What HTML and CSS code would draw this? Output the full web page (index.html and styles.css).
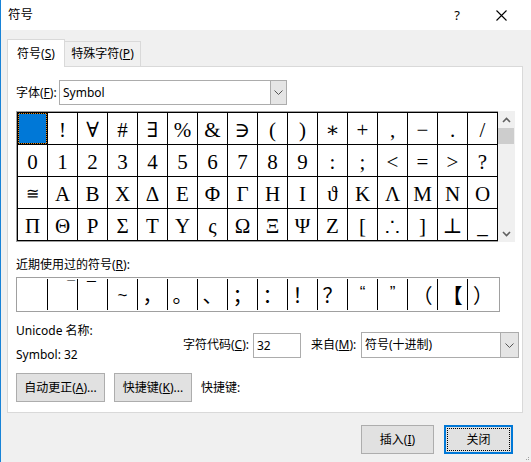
FILE: index.html
```html
<!DOCTYPE html>
<html lang="zh">
<head>
<meta charset="utf-8">
<title>符号</title>
<link rel="stylesheet" href="styles.css">
</head>
<body>
<div class="win">
  <div class="titlebar">
    <span class="title">符号</span>
    <span class="help">?</span>
    <span class="close"><svg width="11" height="11" viewBox="0 0 11 11"><path d="M0.5 0.5 L10.5 10.5 M10.5 0.5 L0.5 10.5" stroke="#000" stroke-width="1.1" fill="none"/></svg></span>
  </div>
  <div class="body">
    <div class="tabs">
      <div class="tab active">符号(<u>S</u>)</div>
      <div class="tab inactive">特殊字符(<u>P</u>)</div>
    </div>
    <div class="panel">
      <div class="fontrow">
        <span class="fontlabel">字体(<u>F</u>):</span>
        <div class="select fontselect">
          <span class="seltext">Symbol</span>
          <span class="selbtn"><svg width="9" height="5" viewBox="0 0 9 5"><polyline points="0.5,0.5 4.5,4.5 8.5,0.5" stroke="#555" stroke-width="1" fill="none"/></svg></span>
        </div>
      </div>
      <div class="gridwrap">
        <div class="gridbox">
          <div class="grid">
            <div class="cell sel"><span></span></div><div class="cell">!</div><div class="cell">∀</div><div class="cell">#</div><div class="cell">∃</div><div class="cell">%</div><div class="cell">&amp;</div><div class="cell">∋</div><div class="cell">(</div><div class="cell">)</div><div class="cell">∗</div><div class="cell">+</div><div class="cell">,</div><div class="cell">−</div><div class="cell">.</div><div class="cell">/</div>
            <div class="cell">0</div><div class="cell">1</div><div class="cell">2</div><div class="cell">3</div><div class="cell">4</div><div class="cell">5</div><div class="cell">6</div><div class="cell">7</div><div class="cell">8</div><div class="cell">9</div><div class="cell">:</div><div class="cell">;</div><div class="cell">&lt;</div><div class="cell">=</div><div class="cell">&gt;</div><div class="cell">?</div>
            <div class="cell small">≅</div><div class="cell">Α</div><div class="cell">Β</div><div class="cell">Χ</div><div class="cell">Δ</div><div class="cell">Ε</div><div class="cell">Φ</div><div class="cell">Γ</div><div class="cell">Η</div><div class="cell">Ι</div><div class="cell">ϑ</div><div class="cell">Κ</div><div class="cell">Λ</div><div class="cell">Μ</div><div class="cell">Ν</div><div class="cell">Ο</div>
            <div class="cell">Π</div><div class="cell">Θ</div><div class="cell">Ρ</div><div class="cell">Σ</div><div class="cell">Τ</div><div class="cell">Υ</div><div class="cell">ς</div><div class="cell">Ω</div><div class="cell">Ξ</div><div class="cell">Ψ</div><div class="cell">Ζ</div><div class="cell">[</div><div class="cell">∴</div><div class="cell">]</div><div class="cell">⊥</div><div class="cell">_</div>
          </div>
        </div>
        <div class="scrollbar">
          <span class="sbtn"><svg width="9" height="6" viewBox="0 0 9 6"><polyline points="1,5 4.5,1.5 8,5" stroke="#606060" stroke-width="1.6" fill="none"/></svg></span>
          <span class="thumb"></span>
          <span class="strack"></span>
          <span class="sbtn"><svg width="9" height="6" viewBox="0 0 9 6"><polyline points="1,1 4.5,4.5 8,1" stroke="#606060" stroke-width="1.6" fill="none"/></svg></span>
        </div>
      </div>
      <div class="recentlabel">近期使用过的符号(<u>R</u>):</div>
      <div class="recent">
        <div class="rc"></div><div class="rc r-right">¯</div><div class="rc latin macron">¯</div><div class="rc latin tilde">~</div><div class="rc">，</div><div class="rc">。</div><div class="rc">、</div><div class="rc">；</div><div class="rc">：</div><div class="rc">！</div><div class="rc">？</div><div class="rc latin quote">“</div><div class="rc latin quote">”</div><div class="rc">（</div><div class="rc bold">【</div><div class="rc last">）</div>
      </div>
      <div class="inforow">
        <div class="infoleft">
          <div class="line">Unicode 名称:</div>
          <div class="line">Symbol: 32</div>
        </div>
        <div class="inforight">
          <span class="codelabel">字符代码(<u>C</u>):</span>
          <div class="input">32</div>
          <span class="fromlabel">来自(<u>M</u>):</span>
          <div class="select fromselect">
            <span class="seltext">符号(十进制)</span>
            <span class="selbtn"><svg width="9" height="5" viewBox="0 0 9 5"><polyline points="0.5,0.5 4.5,4.5 8.5,0.5" stroke="#555" stroke-width="1" fill="none"/></svg></span>
          </div>
        </div>
      </div>
      <div class="btnrow">
        <button class="btn autofix">自动更正(<u>A</u>)...</button>
        <button class="btn shortcut">快捷键(<u>K</u>)...</button>
        <span class="sclabel">快捷键:</span>
      </div>
    </div>
    <div class="footer">
      <button class="btn insert">插入(<u>I</u>)</button>
      <button class="btn primary"><span class="focus">关闭</span></button>
    </div>
  </div>
  <svg class="grip" width="4" height="4" viewBox="0 0 4 4"><rect x="2" y="0" width="1" height="1" fill="#a0a0a0"/><rect x="0" y="2" width="1" height="1" fill="#a0a0a0"/><rect x="2" y="2" width="1" height="1" fill="#a0a0a0"/></svg>
</div>
</body>
</html>
```

FILE: styles.css
```css
* { box-sizing: border-box; }
html, body { margin: 0; padding: 0; }
body {
  width: 531px;
  height: 462px;
  overflow: hidden;
  font-family: "Noto Sans", "Noto Sans CJK SC", sans-serif;
  font-size: 12px;
  color: #000;
  background: #f0f0f0;
}
u { text-decoration: underline; text-underline-offset: 1px; }

.win {
  position: relative;
  width: 531px;
  height: 462px;
  border-left: 1px solid #1883d7;
  background: #f0f0f0;
  display: flex;
  flex-direction: column;
}

.titlebar {
  flex: none;
  height: 30px;
  background: #fff;
  display: flex;
  align-items: center;
  padding-left: 7px;
  padding-right: 15px;
}
.title { flex: 1; font-size: 12.5px; line-height: 16px; }
.help { width: 20px; text-align: center; font-size: 13px; line-height: 16px; }
.close { width: 30px; display: flex; justify-content: center; margin-left: 19px; }
.close svg { display: block; }

.body {
  flex: 1;
  padding: 9px 0 0 6px;
  display: flex;
  flex-direction: column;
}

.tabs { display: flex; align-items: flex-end; }
.tab {
  height: 25px;
  border: 1px solid #d9d9d9;
  border-bottom: none;
  background: #f0f0f0;
  display: flex;
  align-items: center;
  justify-content: center;
  line-height: 16px;
}
.tab.active {
  width: 58px;
  height: 28px;
  background: #fff;
  margin-bottom: -1px;
  position: relative;
  z-index: 1;
}
.tab.inactive { width: 77px; margin-left: -1px; }

.panel {
  width: 516px;
  height: 347px;
  background: #fff;
  border: 1px solid #d9d9d9;
  padding: 13px 0 0 8px;
  display: flex;
  flex-direction: column;
}

.fontrow { display: flex; align-items: center; height: 25px; }
.fontlabel { width: 43px; line-height: 16px; }

.select {
  display: flex;
  align-items: stretch;
  border: 1px solid #acacac;
  background: #fff;
}
.seltext { flex: 1; padding-left: 3px; line-height: 16px; align-self: center; }
.selbtn {
  width: 17px;
  background: #e5e5e5;
  border-left: 1px solid #acacac;
  display: flex;
  align-items: center;
  justify-content: center;
}
.selbtn svg { display: block; }
.fontselect { width: 228px; height: 25px; }
.fontselect .selbtn { width: 16px; }

.gridwrap { display: flex; margin-top: 6px; height: 131px; }
.gridbox {
  border-top: 1px solid #a0a0a0;
  border-left: 1px solid #a0a0a0;
  border-bottom: 1px solid #a0a0a0;
}
.grid {
  display: grid;
  grid-template-columns: repeat(16, 30px);
  grid-auto-rows: 32px;
  border-top: 1px solid #000;
  border-left: 1px solid #000;
}
.cell {
  border-right: 1px solid #000;
  border-bottom: 1px solid #000;
  text-align: center;
  font-family: "Liberation Serif", "DejaVu Serif", serif;
  font-size: 21px;
  line-height: 34px;
  overflow: hidden;
}
.cell.small { font-size: 16px; }
.cell.sel { background: #e08a1a; }
.cell.sel span {
  display: block;
  height: 100%;
  border: 1px dotted #000;
  background: #0078d7;
  background-clip: padding-box;
}

.scrollbar {
  width: 17px;
  background: #f0f0f0;
  display: flex;
  flex-direction: column;
}
.sbtn { height: 17px; display: flex; align-items: center; justify-content: center; }
.sbtn svg { display: block; }
.thumb { height: 16px; margin: 0 1px 0 0; background: #cdcdcd; }
.strack { flex: 1; }

.recentlabel { margin-top: 15px; line-height: 16px; height: 16px; }
.recent {
  margin-top: 4px;
  width: 484px;
  height: 35px;
  border: 1px solid #a0a0a0;
  padding: 1px;
  display: flex;
}
.rc {
  width: 30px;
  height: 31px;
  border-right: 1px solid #000;
  text-align: center;
  font-family: "Noto Sans CJK SC", sans-serif;
  font-size: 20px;
  line-height: 31px;
}
.rc.last { border-right: none; }
.rc.latin { font-family: "Liberation Sans", sans-serif; }
.rc.r-right {
  font-family: "Liberation Sans", sans-serif;
  text-align: right;
  padding-right: 2px;
  font-size: 14px;
  line-height: 14px;
}
.rc.macron { font-size: 16px; line-height: 20px; text-align: left; padding-left: 9px; }
.rc.tilde { font-size: 17px; line-height: 34px; }
.rc.quote { font-size: 17px; line-height: 28px; }
.rc.bold { font-weight: 700; }

.inforow { display: flex; margin-top: 11px; height: 40px; }
.infoleft { width: 167px; display: flex; flex-direction: column; gap: 8px; }
.line { line-height: 16px; height: 16px; }
.inforight { display: flex; align-items: center; margin-top: 9px; height: 26px; }
.codelabel { width: 70px; line-height: 16px; }
.input {
  width: 48px;
  height: 25px;
  border: 1px solid #acacac;
  padding-left: 3px;
  line-height: 23px;
}
.fromlabel { margin-left: 10px; width: 50px; line-height: 16px; }
.fromselect { width: 158px; height: 26px; }
.fromselect .selbtn { width: 18px; }

.btnrow { display: flex; align-items: center; margin-top: 10px; height: 29px; }
.btn {
  font-family: inherit;
  font-size: 12px;
  color: #000;
  background: #e1e1e1;
  border: 1px solid #adadad;
  border-radius: 0;
  padding: 0;
  height: 29px;
  line-height: 16px;
}
.autofix { width: 89px; }
.shortcut { width: 78px; margin-left: 9px; }
.sclabel { margin-left: 9px; line-height: 16px; }

.footer {
  display: flex;
  justify-content: flex-end;
  gap: 10px;
  margin-top: 12px;
  padding-right: 18px;
}
.insert { width: 73px; }
.primary {
  width: 69px;
  border: 2px solid #0078d7;
  padding: 1px;
  display: flex;
}
.primary .focus {
  flex: 1;
  border: 1px dotted #000;
  display: flex;
  align-items: center;
  justify-content: center;
}

.grip { position: absolute; right: 1px; bottom: 1px; }
```
